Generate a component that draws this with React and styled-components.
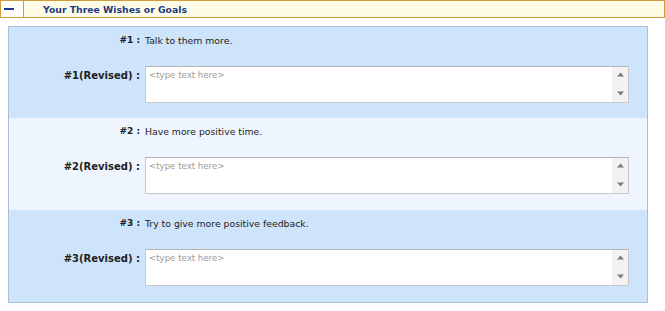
import React from 'react';
import styled, { createGlobalStyle } from 'styled-components';

const GlobalStyle = createGlobalStyle`
  body {
    margin: 0;
    background: #fff;
    font-family: "DejaVu Sans", Verdana, sans-serif;
    font-size: 9px;
    color: #222;
  }
`;

const SectionHeader = styled.div`
  display: flex;
  height: 16px;
  border: 1px solid #cf9b3e;
  background: #fffce6;
`;

const ToggleCell = styled.div`
  width: 23px;
  display: flex;
  align-items: center;
  border-right: 1px solid #cf9b3e;
  background: #fffef8;
  padding-left: 3px;
  box-sizing: border-box;
`;

const Minus = styled.span`
  display: block;
  width: 10px;
  height: 2px;
  background: #1c3a86;
`;

const HeaderTitle = styled.div`
  display: flex;
  align-items: center;
  padding-left: 19px;
  font-weight: bold;
  font-size: 9.3px;
  color: #1c3a86;
`;

const Panel = styled.div`
  margin: 8px 0 0 8px;
  width: 640px;
  border: 1px solid #a7bfdc;
  box-sizing: border-box;
`;

const Row = styled.div`
  display: grid;
  grid-template-columns: 131px 1fr;
  column-gap: 5px;
  row-gap: 19px;
  padding: 7px 18px 16px 0;
  background: ${p => (p.$alt ? '#eef5fe' : '#cde4fa')};
  &:first-child {
    padding-bottom: 15px;
  }
`;

const Label = styled.div`
  text-align: right;
  font-weight: bold;
  line-height: 13px;
  font-size: ${p => (p.$top ? '10px' : '9px')};
  padding-top: ${p => (p.$top ? '3px' : '0')};
  white-space: nowrap;
  color: #1e1e1e;
`;

const Question = styled.div`
  line-height: 13px;
  font-size: 9.3px;
  color: #222;
`;

const InputBox = styled.div`
  display: flex;
  height: 37px;
  border: 1px solid #c9c9c9;
  border-top-color: #b4b4b4;
  background: #fff;
  box-sizing: border-box;
`;

const TextInput = styled.textarea`
  flex: 1;
  border: none;
  outline: none;
  resize: none;
  overflow: hidden;
  padding: 2px 3px;
  margin: 0;
  font-family: "DejaVu Sans", Verdana, sans-serif;
  font-size: 8.6px;
  line-height: 12px;
  background: transparent;
  &::placeholder {
    color: #9a9a9a;
  }
`;

const Scrollbar = styled.div`
  width: 16px;
  background: #f2f2f2;
  display: flex;
  flex-direction: column;
  justify-content: space-between;
  align-items: center;
  padding: 5px 0 6px;
  box-sizing: border-box;
`;

const Arrow = ({ down }) => (
  <svg width="7" height="5" viewBox="0 0 7 5">
    {down ? (
      <>
        <rect x="0" y="0" width="7" height="1" fill="#b8b8b8" />
        <polygon points="0.5,1 6.5,1 3.5,4.5" fill="#7a7a7a" />
      </>
    ) : (
      <>
        <polygon points="3.5,0.5 6.5,4 0.5,4" fill="#7a7a7a" />
        <rect x="0" y="4" width="7" height="1" fill="#b8b8b8" />
      </>
    )}
  </svg>
);

const wishes = [
  { n: 1, text: 'Talk to them more.' },
  { n: 2, text: 'Have more positive time.' },
  { n: 3, text: 'Try to give more positive feedback.' },
];

export default function App() {
  return (
    <>
      <GlobalStyle />
      <SectionHeader>
        <ToggleCell>
          <Minus />
        </ToggleCell>
        <HeaderTitle>Your Three Wishes or Goals</HeaderTitle>
      </SectionHeader>
      <Panel>
        {wishes.map((w, i) => (
          <Row key={w.n} $alt={i === 1}>
            <Label>#{w.n} :</Label>
            <Question>{w.text}</Question>
            <Label $top>#{w.n}(Revised) :</Label>
            <InputBox>
              <TextInput placeholder="<type text here>" />
              <Scrollbar>
                <Arrow />
                <Arrow down />
              </Scrollbar>
            </InputBox>
          </Row>
        ))}
      </Panel>
    </>
  );
}
